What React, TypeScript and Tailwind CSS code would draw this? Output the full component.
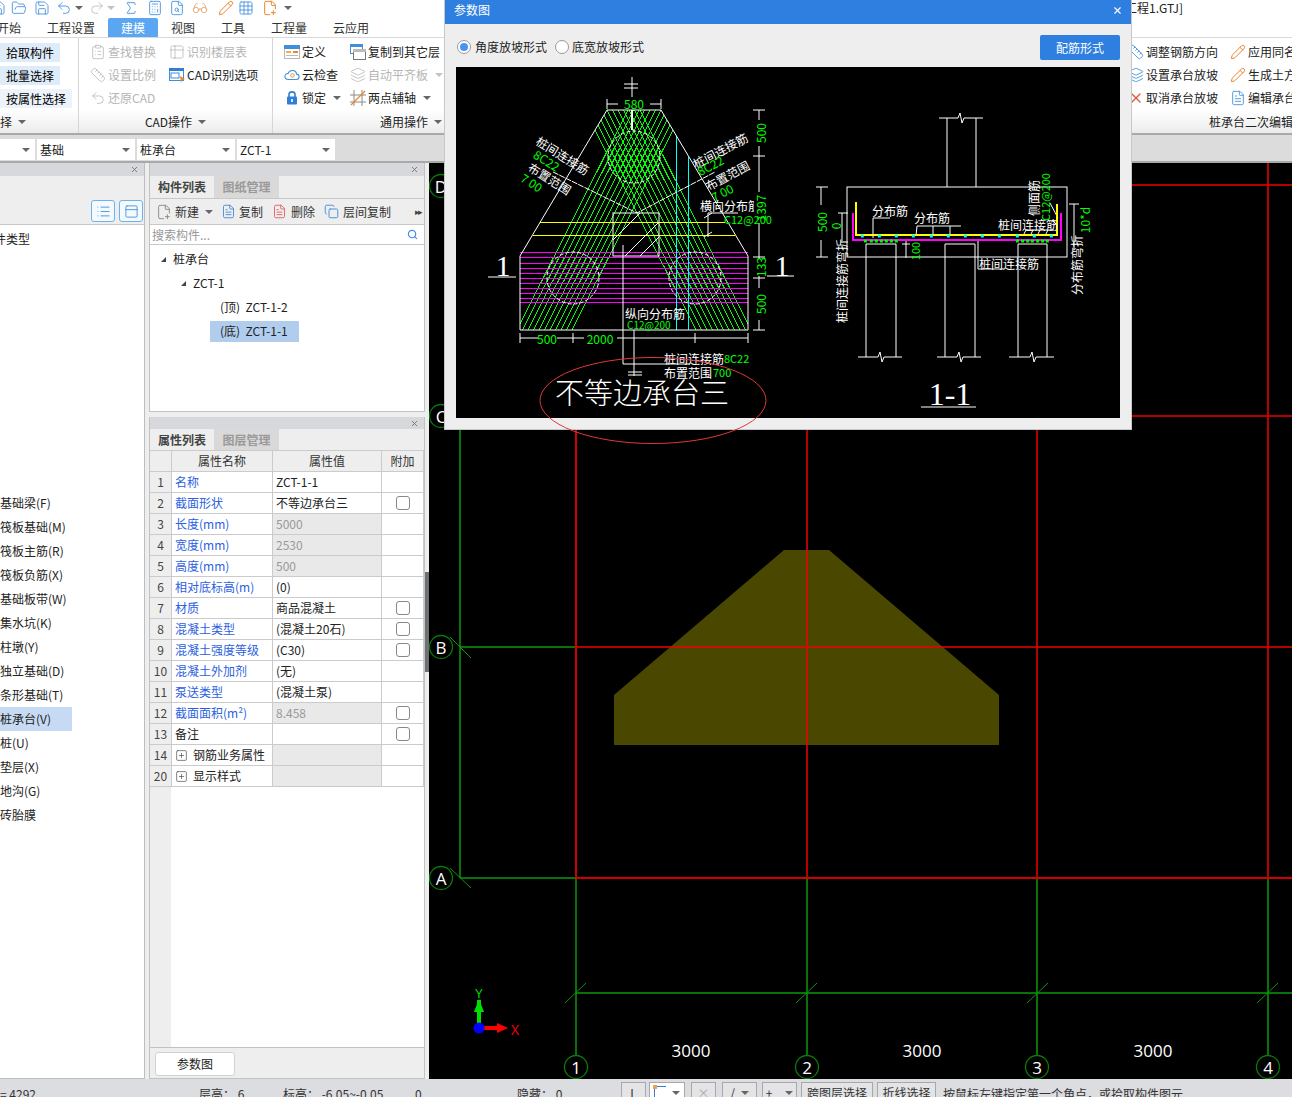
import type { ReactNode } from 'react';
import {
  Calculator, ClipboardList, Copy, FilePlus2, FileSearch, FileText, FolderOpen, Glasses, Grid3x3,
  Layers, List, PanelTop, Pencil, Redo2, Ruler, Save, Search, Sigma, SquarePlus, Table2, Undo2, X,
} from 'lucide-react';

const Caret = ({ className = '' }: { className?: string }) => (
  <span className={`inline-block w-0 h-0 border-x-[4px] border-t-[4px] border-x-transparent border-t-[#666] ${className}`} />
);

const DefineIcon = () => (
  <svg width="16" height="16" viewBox="0 0 16 16">
    <rect x="0.5" y="1.5" width="15" height="13" fill="#fff" stroke="#b8b8b8" />
    <rect x="0" y="1" width="16" height="4" fill="#3f8fdc" />
    <rect x="2" y="7" width="5" height="2" fill="#f0b040" />
    <rect x="9" y="7" width="5" height="2" fill="#e8862e" />
    <rect x="2" y="11" width="12" height="1" fill="#bbb" />
  </svg>
);

const CopyLayerIcon = () => (
  <svg width="16" height="16" viewBox="0 0 16 16">
    <rect x="0.5" y="0.5" width="12" height="9" fill="#fff" stroke="#3f8fdc" />
    <rect x="0" y="0" width="13" height="3" fill="#3f8fdc" />
    <rect x="3.5" y="5.5" width="12" height="10" fill="#fff" stroke="#777" />
    <rect x="3" y="5" width="13" height="3" fill="#bbb" />
  </svg>
);

const CloudIcon = () => (
  <svg width="18" height="16" viewBox="0 0 18 16" fill="none">
    <path d="M5 13C2 13 1 11 1 9.500C1 7.500 3 6 4.500 6.500C5.500 3.500 8 2.500 10.500 3C13 3.500 14 5.500 14 7C16 7 17 8.500 17 10C17 12 15.500 13 14 13Z" stroke="#3f8fdc" strokeWidth="1.200" fill="#fff" />
    <circle cx="9.500" cy="8.500" r="2" stroke="#e8862e" />
  </svg>
);

const LockIcon = () => (
  <svg width="12" height="15" viewBox="0 0 12 15" fill="none">
    <path d="M3 7V4.500C3 1 9 1 9 4.500V7" stroke="#2f7fd6" strokeWidth="1.600" />
    <rect x="1" y="6.500" width="10" height="8" rx="1" fill="#2f7fd6" />
    <rect x="5.200" y="9" width="1.600" height="3" fill="#fff" />
  </svg>
);

const CadIcon = () => (
  <svg width="16" height="16" viewBox="0 0 16 16">
    <rect x="0.5" y="1.500" width="14" height="12" fill="#fff" stroke="#3f8fdc" />
    <rect x="0" y="1" width="15" height="3" fill="#2f7fd6" />
    <rect x="2" y="6" width="8" height="5" fill="none" stroke="#3f8fdc" />
    <polygon points="11,9 16,12 13,13 12,16" fill="#e8862e" />
  </svg>
);

const AxisIcon = () => (
  <svg width="16" height="16" viewBox="0 0 16 16" fill="none" stroke="#8a8a8a">
    <path d="M4 0V16M12 0V16M0 5H16M0 12H16" />
    <path d="M1 15L15 1" stroke="#e8862e" strokeWidth="1.300" />
  </svg>
);

function RibbonItem({ icon, label, disabled, caret, className = '' }: { icon?: ReactNode; label: string; disabled?: boolean; caret?: boolean; className?: string }) {
  return (
    <div className={`flex items-center h-[23px] gap-[2px] whitespace-nowrap ${disabled ? 'text-[#b5b5b5]' : 'text-[#222]'} ${className}`}>
      <span className="w-4 h-4 flex items-center justify-center shrink-0">{icon}</span>
      <span>{label}</span>
      {caret && <Caret className={`ml-[5px] ${disabled ? 'opacity-40' : ''}`} />}
    </div>
  );
}

function GroupTitle({ children, className = '' }: { children: ReactNode; className?: string }) {
  return <div className={`absolute left-0 right-0 bottom-[1px] h-[20px] flex items-center gap-[6px] text-[#222] whitespace-nowrap ${className}`}>{children}<Caret /></div>;
}

const gray = { size: 16, strokeWidth: 1.3, color: '#bdbdbd' };
const blue = { size: 16, strokeWidth: 1.3, color: '#3f8fdc' };
const orange = { size: 16, strokeWidth: 1.5, color: '#e8862e' };

function TopBars() {
  return (
    <>
      <div className="h-[18px] bg-white flex items-center overflow-hidden pb-[3px]">
        <Save {...blue} className="-ml-[10px] shrink-0" />
        <FolderOpen {...blue} className="ml-[5px] shrink-0" />
        <Save {...blue} className="ml-[7px] shrink-0" />
        <Undo2 {...blue} className="ml-[6px] shrink-0" />
        <Caret className="ml-[3px]" />
        <Redo2 {...gray} className="ml-[6px] shrink-0" />
        <Caret className="ml-[2px] opacity-40" />
        <Sigma {...blue} className="ml-[8px] shrink-0" />
        <Calculator {...blue} className="ml-[8px] shrink-0" />
        <FileSearch {...blue} className="ml-[6px] shrink-0" />
        <Glasses size={16} strokeWidth={1.3} color="#e8a36a" className="ml-[7px] shrink-0" />
        <Pencil {...orange} className="ml-[10px] shrink-0" />
        <Grid3x3 {...blue} className="ml-[4px] shrink-0" />
        <FilePlus2 {...orange} className="ml-[8px] shrink-0" />
        <Caret className="ml-[6px]" />
        <div className="ml-auto w-[167px] shrink-0 text-xs text-[#222] whitespace-nowrap">工程1.GTJ]</div>
      </div>
      <div className="h-[19px] bg-white flex items-stretch text-xs text-[#333] whitespace-nowrap">
        <span className="-ml-[3px] flex items-center pt-[1px]">开始</span>
        <span className="ml-[26px] flex items-center pt-[1px]">工程设置</span>
        <span className="ml-[13px] w-[50px] flex items-center justify-center bg-[#5aa6f2] text-white rounded-t-[2px] pt-[1px]">建模</span>
        <span className="ml-[13px] flex items-center pt-[1px]">视图</span>
        <span className="ml-[26px] flex items-center pt-[1px]">工具</span>
        <span className="ml-[26px] flex items-center pt-[1px]">工程量</span>
        <span className="ml-[26px] flex items-center pt-[1px]">云应用</span>
      </div>
    </>
  );
}

function Ribbon() {
  return (
    <div className="h-[98px] flex text-xs border-t border-[#d9d9d9] border-b-2 border-b-[#a9a9a9] bg-gradient-to-b from-white from-75% to-[#ececec] overflow-hidden">
      <div className="relative w-[79px] shrink-0 pt-[3px] border-r border-[#d6d6d6]">
        <div className="flex flex-col">
          <div className="h-[23px] flex items-center"><span className="w-[60px] h-[19px] pl-[6px] bg-[#deebf9] flex items-center">拾取构件</span></div>
          <div className="h-[23px] flex items-center"><span className="w-[60px] h-[19px] pl-[6px] bg-[#deebf9] flex items-center">批量选择</span></div>
          <div className="h-[23px] flex items-center"><span className="w-[72px] h-[19px] pl-[6px] bg-[#edf3fb] flex items-center">按属性选择</span></div>
        </div>
        <GroupTitle><span>择</span></GroupTitle>
      </div>

      <div className="relative w-[194px] shrink-0 pt-[2px] pl-[11px] border-r border-[#d6d6d6]">
        <div className="grid grid-cols-[79px_auto]">
          <RibbonItem disabled label="查找替换" icon={<ClipboardList {...gray} />} />
          <RibbonItem disabled label="识别楼层表" icon={<Table2 {...gray} />} />
          <RibbonItem disabled label="设置比例" icon={<Ruler {...gray} />} />
          <RibbonItem label="CAD识别选项" icon={<CadIcon />} />
          <RibbonItem disabled label="还原CAD" icon={<Undo2 {...gray} />} />
        </div>
        <GroupTitle className="justify-center"><span>CAD操作</span></GroupTitle>
      </div>

      <div className="relative w-[171px] shrink-0 pt-[2px] pl-[11px]">
        <div className="grid grid-cols-[66px_auto]">
          <RibbonItem label="定义" icon={<DefineIcon />} />
          <RibbonItem label="复制到其它层" icon={<CopyLayerIcon />} />
          <RibbonItem label="云检查" icon={<CloudIcon />} />
          <RibbonItem disabled caret label="自动平齐板" icon={<Layers {...gray} />} />
          <RibbonItem caret label="锁定" icon={<LockIcon />} />
          <RibbonItem caret label="两点辅轴" icon={<AxisIcon />} />
        </div>
        <GroupTitle className="justify-end pr-[2px]"><span>通用操作</span></GroupTitle>
      </div>

      <div className="w-[684px] shrink-0" />

      <div className="relative flex-1 pt-[2px]">
        <div className="grid grid-cols-[102px_auto] whitespace-nowrap">
          <RibbonItem label="调整钢筋方向" icon={<Ruler {...blue} />} />
          <RibbonItem label="应用同名" icon={<Pencil {...orange} />} />
          <RibbonItem label="设置承台放坡" icon={<Layers {...blue} />} />
          <RibbonItem label="生成土方" icon={<Pencil {...orange} />} />
          <RibbonItem label="取消承台放坡" icon={<X size={16} strokeWidth={2} color="#e05a4a" />} />
          <RibbonItem label="编辑承台" icon={<FileText {...blue} />} />
        </div>
        <div className="absolute left-[81px] bottom-[1px] h-[20px] flex items-center whitespace-nowrap text-[#222]">桩承台二次编辑</div>
      </div>
    </div>
  );
}

function Selector({ label, className }: { label?: string; className: string }) {
  return (
    <div className={`h-[21px] bg-white flex items-center justify-between pl-[3px] pr-[5px] text-xs text-[#222] ${className}`}>
      <span>{label}</span>
      <Caret />
    </div>
  );
}

function SelectorRow() {
  return (
    <div className="h-[28px] bg-[#dcdcdc] border-b-2 border-b-[#a9a9a9] flex items-start pt-[4px] gap-[2px]">
      <Selector className="w-[35px]" />
      <Selector className="w-[98px]" label="基础" />
      <Selector className="w-[98px]" label="桩承台" />
      <Selector className="w-[98px]" label="ZCT-1" />
    </div>
  );
}

const PanelHeader = ({ className = 'h-[13px]' }: { className?: string }) => (
  <div className={`${className} bg-[#d7d8dc] flex items-center justify-end pr-[5px] shrink-0`}>
    <X size={9} strokeWidth={2.5} color="#777" />
  </div>
);

const navItems = ['基础梁(F)', '筏板基础(M)', '筏板主筋(R)', '筏板负筋(X)', '基础板带(W)', '集水坑(K)', '柱墩(Y)', '独立基础(D)', '条形基础(T)', '桩承台(V)', '桩(U)', '垫层(X)', '地沟(G)', '砖胎膜'];

function LeftPanel() {
  return (
    <div className="w-[145px] shrink-0 flex flex-col border-r border-[#bdbdbd]">
      <PanelHeader />
      <div className="h-[22px] bg-[#eeeeee] shrink-0" />
      <div className="h-[27px] bg-[#eeeeee] border-b border-[#c8c8c8] flex items-center justify-end gap-[4px] pr-[1px] shrink-0">
        <span className="w-6 h-[22px] border border-[#6db1ee] rounded-[3px] flex items-center justify-center bg-[#f4f9fe]"><List size={15} strokeWidth={1.4} color="#3f8fdc" /></span>
        <span className="w-6 h-[22px] border border-[#6db1ee] rounded-[3px] flex items-center justify-center bg-[#f4f9fe]"><PanelTop size={15} strokeWidth={1.4} color="#3f8fdc" /></span>
      </div>
      <div className="flex-1 bg-white text-xs text-[#222] pt-[5px] border-b border-[#bdbdbd]">
        <div className="h-[18px] flex items-center -ml-[6px]">件类型</div>
        <div className="h-[243px]" />
        {navItems.map((item) => (
          <div key={item} className={`h-6 flex items-center whitespace-nowrap w-[72px] ${item === '桩承台(V)' ? 'bg-[#c6daf3]' : ''}`}>{item}</div>
        ))}
      </div>
    </div>
  );
}

function PanelTabs({ active, other, className }: { active: string; other: string; className: string }) {
  return (
    <div className={`${className} bg-[#eeeeee] flex text-xs shrink-0`}>
      <span className="w-[64px] flex items-center justify-center font-bold text-[#444]">{active}</span>
      <span className="w-[65px] flex items-center justify-center bg-[#d9d9d9] text-[#999] font-bold">{other}</span>
    </div>
  );
}

function ComponentPanel() {
  const tree = [
    { label: '桩承台', indent: 'pl-[11px]', arrow: true },
    { label: 'ZCT-1', indent: 'pl-[31px]', arrow: true },
    { label: '(顶)  ZCT-1-2', indent: 'pl-[70px]' },
    { label: '(底)  ZCT-1-1', indent: 'pl-[70px]', selected: true },
  ];
  return (
    <div className="h-[249px] shrink-0 flex flex-col border border-t-0 border-[#c2c2c2] bg-white">
      <PanelHeader />
      <PanelTabs active="构件列表" other="图纸管理" className="h-[22px]" />
      <div className="h-[27px] bg-[#eeeeee] border-y border-[#c8c8c8] flex items-center text-xs text-[#333] pl-[6px] shrink-0 whitespace-nowrap">
        <FilePlus2 size={16} strokeWidth={1.2} color="#777" />
        <span className="ml-[3px]">新建</span>
        <Caret className="ml-[6px]" />
        <FileText size={15} strokeWidth={1.3} color="#2f7fd6" className="ml-[8px]" />
        <span className="ml-[3px]">复制</span>
        <FileText size={15} strokeWidth={1.3} color="#d9534f" className="ml-[9px]" />
        <span className="ml-[4px]">删除</span>
        <Copy size={15} strokeWidth={1.5} color="#3f8fdc" className="ml-[9px]" />
        <span className="ml-[4px]">层间复制</span>
        <span className="ml-auto mr-[3px] text-[9px] text-[#444] tracking-[-2px]">▸▸</span>
      </div>
      <div className="h-[20px] border-b border-[#c8c8c8] flex items-center justify-between px-[2px] text-xs text-[#999] shrink-0">
        <span>搜索构件...</span>
        <Search size={11} strokeWidth={2.5} color="#3f8fdc" className="mr-[4px]" />
      </div>
      <div className="flex-1 pt-[2px] text-xs text-[#222]">
        {tree.map((row) => (
          <div key={row.label} className={`h-6 flex items-center whitespace-pre ${row.indent}`}>
            {row.arrow && <span className="w-0 h-0 mr-[7px] border-l-[5px] border-b-[5px] border-l-transparent border-b-[#444]" />}
            {row.selected ? <span className="-ml-[10px] w-[89px] h-[21px] pl-[10px] bg-[#b1cdee] flex items-center">{row.label}</span> : <span>{row.label}</span>}
          </div>
        ))}
      </div>
    </div>
  );
}

type Prop = { no: number; name: string; value?: string; check?: boolean; muted?: boolean; blue?: boolean; plus?: boolean };

const props: Prop[] = [
  { no: 1, name: '名称', value: 'ZCT-1-1', blue: true },
  { no: 2, name: '截面形状', value: '不等边承台三', check: true, blue: true },
  { no: 3, name: '长度(mm)', value: '5000', muted: true, blue: true },
  { no: 4, name: '宽度(mm)', value: '2530', muted: true, blue: true },
  { no: 5, name: '高度(mm)', value: '500', muted: true, blue: true },
  { no: 6, name: '相对底标高(m)', value: '(0)', blue: true },
  { no: 7, name: '材质', value: '商品混凝土', check: true, blue: true },
  { no: 8, name: '混凝土类型', value: '(混凝土20石)', check: true, blue: true },
  { no: 9, name: '混凝土强度等级', value: '(C30)', check: true, blue: true },
  { no: 10, name: '混凝土外加剂', value: '(无)', blue: true },
  { no: 11, name: '泵送类型', value: '(混凝土泵)', blue: true },
  { no: 12, name: '截面面积(m²)', value: '8.458', check: true, muted: true, blue: true },
  { no: 13, name: '备注', value: '', check: true },
  { no: 14, name: '钢筋业务属性', muted: true, plus: true },
  { no: 20, name: '显示样式', muted: true, plus: true },
];

function PropertyPanel() {
  const cell = 'border-r border-b border-[#cbcbcb] flex items-center whitespace-nowrap overflow-hidden';
  return (
    <div className="flex-1 flex flex-col border border-t-0 border-[#c2c2c2] bg-white min-h-0">
      <PanelHeader className="h-[12px]" />
      <PanelTabs active="属性列表" other="图层管理" className="h-[21px]" />
      <div className="grid grid-cols-[22px_101px_109px_42px] auto-rows-[21px] text-xs border-t border-[#cbcbcb] w-[274px] shrink-0">
        <div className={`${cell} bg-[#eeeeee]`} />
        <div className={`${cell} bg-[#eeeeee] justify-center text-[#333]`}>属性名称</div>
        <div className={`${cell} bg-[#eeeeee] justify-center text-[#333]`}>属性值</div>
        <div className={`${cell} bg-[#eeeeee] justify-center text-[#333]`}>附加</div>
        {props.map((p) => (
          <div key={p.no} className="contents">
            <div className={`${cell} bg-[#eeeeee] justify-center text-[#444]`}>{p.no}</div>
            <div className={`${cell} pl-[3px] ${p.blue ? 'text-[#2c5fe0]' : 'text-[#222]'}`}>
              {p.plus && <SquarePlus size={13} strokeWidth={1.2} color="#444" className="mr-[5px] shrink-0" />}
              {p.name}
            </div>
            <div className={`${cell} pl-[3px] ${p.muted ? 'bg-[#e9e9e9] text-[#999]' : 'text-[#222]'}`}>{p.value}</div>
            <div className={`${cell} justify-center`}>
              {p.check && <span className="w-[14px] h-[14px] border border-[#888] rounded-[3px] bg-white" />}
            </div>
          </div>
        ))}
      </div>
      <div className="flex-1 flex">
        <div className="w-[21px] bg-[#eeeeee]" />
      </div>
      <div className="h-[31px] bg-[#eeeeee] border-t border-[#c2c2c2] pl-[5px] pt-[4px] shrink-0">
        <div className="w-[80px] h-[24px] bg-white border border-[#d2d2d2] rounded-[3px] flex items-center justify-center text-xs text-[#222]">参数图</div>
      </div>
    </div>
  );
}

function Bubble({ x, y, label }: { x: number; y: number; label: string }) {
  return (
    <g>
      <circle cx={x} cy={y} r={11.5} fill="#000" stroke="#0a7a0a" strokeWidth={1.3} />
      <text x={x} y={y} fill="#fff" fontSize={17} textAnchor="middle" dominantBaseline="central" fontFamily="'Open Sans', sans-serif">{label}</text>
    </g>
  );
}

function Canvas() {
  const G = '#0d960d';
  const R = '#f00000';
  return (
    <div className="flex-1 bg-black min-w-0">
      <svg viewBox="429 163 863 916" className="block w-full h-full" fontFamily="'Open Sans', sans-serif">
        <polygon points="614,695 784,550 829,550 999,695 999,745 614,745" fill="#4a4800" />
        <g fill="none" strokeWidth={1.5}>
          <path d="M460 163V878M460 185H576M460 416H576M460 647H576M460 878H576" stroke={G} />
          <path d="M576 878V1079M807 878V1079M1037 878V1079M1268 878V1079M576 993H1292" stroke={G} />
          <path d="M807 163V878M1037 163V878M1268 163V878M576 185H1292M576 416H1292M576 647H1292" stroke={R} />
        </g>
        <g shapeRendering="crispEdges" fill="none">
          <path d="M576 163V878" stroke="#d00000" strokeWidth={2} />
          <path d="M576 878H1292" stroke="#d00000" strokeWidth={2} />
        </g>
        <path d="M450 637L471 658M450 868L471 888M565 1003L586 983M796 1003L817 983M1027 1003L1048 983M1257 1003L1278 983" stroke={G} strokeWidth={1} />
        <Bubble x={441} y={186} label="D" />
        <Bubble x={441} y={416} label="C" />
        <Bubble x={441} y={647} label="B" />
        <Bubble x={441} y={878} label="A" />
        <Bubble x={576} y={1067} label="1" />
        <Bubble x={807} y={1067} label="2" />
        <Bubble x={1037} y={1067} label="3" />
        <Bubble x={1268} y={1067} label="4" />
        {[691, 922, 1153].map((x) => (
          <text key={x} x={x} y={1050} fill="#fff" fontSize={17} textAnchor="middle" dominantBaseline="central">3000</text>
        ))}
        <path d="M479 1028V1000" stroke="#00e000" strokeWidth={4} />
        <polygon points="479,999 474,1012 484,1012" fill="#00e000" />
        <path d="M479 1028H500" stroke="#ff0000" strokeWidth={4} />
        <polygon points="508,1028 497,1023 497,1033" fill="#ff0000" />
        <circle cx={479} cy={1028} r={5.5} fill="#0000ff" />
        <text x={479} y={993} fill="#00e000" fontSize={13} textAnchor="middle" dominantBaseline="central">Y</text>
        <text x={515} y={1029} fill="#ff0000" fontSize={14} textAnchor="middle" dominantBaseline="central">X</text>
      </svg>
    </div>
  );
}

function DrawText({ x, y, text, size = 12, fill = '#fff', rotate, anchor = 'middle', family, weight }: { x: number; y: number; text: string; size?: number; fill?: string; rotate?: number; anchor?: 'start' | 'middle' | 'end'; family?: string; weight?: number }) {
  return (
    <text x={x} y={y} fill={fill} fontSize={size} fontFamily={family} fontWeight={weight} textAnchor={anchor} dominantBaseline="central" transform={rotate ? `rotate(${rotate} ${x} ${y})` : undefined}>{text}</text>
  );
}

const SERIF = "'Liberation Serif', 'Noto Sans CJK SC', serif";
const hatchA = Array.from({ length: 11 }, (_, i) => 517 + 5.5 * i);
const magentaYs = [252, 257, 263, 268, 273, 278, 283, 288, 293, 298, 302];
const cyanDots = [187, 238, 289, 340, 394, 445, 496, 547, 598, 652, 703, 754].map((v) => v / 3 + 800);
const greenDots = [196, 214, 229, 244, 259, 274, 289, 652, 668, 683, 697, 713, 728, 742].map((v) => v / 3 + 800);

function PlanDrawing() {
  const GR = '#00ff00';
  return (
    <svg viewBox="456 67 664 351" className="block w-[664px] h-[351px] bg-black" fontFamily="'Noto Sans CJK SC', sans-serif">
      <defs>
        <clipPath id="outline"><polygon points="607,110 661,110 748,256 748,330 520,330 520,256" /></clipPath>
        <clipPath id="cut"><rect x="690" y="190" width="64" height="30" /></clipPath>
      </defs>
      <g clipPath="url(#outline)" stroke={GR} strokeWidth={1} shapeRendering="crispEdges">
        {hatchA.map((x) => <line key={x} x1={x + 111} y1={110} x2={x} y2={330} />)}
        {hatchA.map((x) => <line key={x} x1={1268 - x - 111} y1={110} x2={1268 - x} y2={330} />)}
      </g>
      <g stroke="#ffff00" shapeRendering="crispEdges">
        <line x1={540} y1={222} x2={725} y2={222} />
        <line x1={533} y1={235} x2={735} y2={235} />
      </g>
      <g stroke="#ff00ff" shapeRendering="crispEdges">
        {magentaYs.map((y) => <line key={y} x1={520} y1={y} x2={748} y2={y} />)}
      </g>
      <path d="M676 136V330M688 157V330" stroke="#00ffff" shapeRendering="crispEdges" />
      <g fill="none" stroke="#fff" strokeWidth={1}>
        <polygon points="607,110 661,110 748,256 748,330 520,330 520,256" />
        <circle cx={634} cy={157} r={26} strokeDasharray="4 2" />
        <circle cx={573} cy={278} r={26} strokeDasharray="4 2" />
        <circle cx={695} cy={278} r={26} strokeDasharray="4 2" />
        <rect x={613} y={213} width={46} height={43} />
        <path d="M613 240L640 213M625 256L659 222M640 256L659 237" />
        <path d="M553 172L637 213L715 172" strokeDasharray="6 1" />
        <path d="M632 110V130" strokeWidth={2} />
        <path d="M632 77V97M624 84H638M624 88H638" />
        <path d="M607 104H618M650 104H661M607 99V109M661 99V109" />
        <path d="M759 110V120M759 146V192M759 223V258M759 276V288M759 320V330M753 110H765M753 156H765M753 257H765M753 278H765M753 330H765" />
        <path d="M488 277H516M767 276H794" />
        <path d="M520 338H538M557 338H584M617 338H748M520 333V343M573 333V343M695 333V343M748 333V343" />
        <path d="M623 245V364H690M634 330V376M628 372H642M628 375H642" />
        <path d="M708 237V213H738M704 237L712 232M704 218L712 213" />
      </g>
      <DrawText x={634} y={103} text="580" fill={GR} size={12} />
      <DrawText x={760} y={133} text="500" fill={GR} size={12} rotate={-90} />
      <DrawText x={760} y={208} text="1397" fill={GR} size={12} rotate={-90} />
      <DrawText x={760} y={267} text="133" fill={GR} size={12} rotate={-90} />
      <DrawText x={760} y={304} text="500" fill={GR} size={12} rotate={-90} />
      <DrawText x={547} y={338} text="500" fill={GR} size={12} />
      <DrawText x={600} y={338} text="2000" fill={GR} size={12} />
      <DrawText x={503} y={265} text="1" size={30} family={SERIF} />
      <DrawText x={782} y={265} text="1" size={30} family={SERIF} />
      <DrawText x={563} y={155} text="桩间连接筋" rotate={32} />
      <DrawText x={547} y={160} text="8C22" fill={GR} rotate={32} />
      <DrawText x={550} y={178} text="布置范围" rotate={32} />
      <DrawText x={532} y={182} text="7 00" fill={GR} rotate={32} />
      <DrawText x={720} y={150} text="桩间连接筋" rotate={-28} />
      <DrawText x={710} y={165} text="8C22" fill={GR} rotate={-28} />
      <DrawText x={727} y={175} text="布置范围" rotate={-28} />
      <DrawText x={722} y={192} text="7 00" fill={GR} rotate={-28} />
      <g clipPath="url(#cut)"><DrawText x={700} y={205} text="横向分布筋" anchor="start" /></g>
      <DrawText x={724} y={219} text="C12@200" fill={GR} anchor="start" size={11} />
      <DrawText x={625} y={313} text="纵向分布筋" anchor="start" />
      <DrawText x={627} y={324} text="C12@200" fill={GR} anchor="start" size={10} />
      <DrawText x={664} y={358} text="桩间连接筋" anchor="start" />
      <DrawText x={724} y={358} text="8C22" fill={GR} anchor="start" size={11} />
      <DrawText x={664} y={372} text="布置范围" anchor="start" />
      <DrawText x={713} y={372} text="700" fill={GR} anchor="start" size={11} />
      <DrawText x={642} y={391} text="不等边承台三" size={29} weight={300} />

      <g fill="none" stroke="#fff" strokeWidth={1}>
        <rect x={847} y={187} width={220} height={70} />
        <path d="M947 187V118M976 187V118M939 118H958L960 113L962 123L964 118H983" />
        <path d="M866 357V244H896V357M858 357H878L880 352L882 362L884 357H902" />
        <path d="M945 357V244H975V357M937 357H957L959 352L961 362L963 357H981" />
        <path d="M1018 357V244H1047V357M1009 357H1030L1032 352L1034 362L1036 357H1054" />
        <path d="M821 187V205M821 240V257M816 187H828M816 257H828M842 213V241M838 213H848M1074 204V250M1069 204H1079M906 241V258M902 244H910" />
        <path d="M873 238V218H890M916 236L917 226H961M933 236V226M950 236V226M978 239V269H1004" />
        <path d="M1023 236L1026 230H1054M1030 236L1033 230M1037 236L1040 230M1045 236L1048 230M1050 203L1058 218M1052 220L1058 226" />
      </g>
      <path d="M856 202V235H1057V204" fill="none" stroke="#ffff00" strokeWidth={2} />
      <path d="M853 213V240H1061V213" fill="none" stroke="#ff00ff" strokeWidth={2} />
      {cyanDots.map((x) => <rect key={x} x={x - 1.5} y={234.5} width={3} height={3} fill="#00ffff" />)}
      {greenDots.map((x) => <rect key={x} x={x - 1.5} y={239.5} width={3} height={3} fill="#00ff00" />)}
      <DrawText x={890} y={210} text="分布筋" />
      <DrawText x={932} y={217} text="分布筋" />
      <DrawText x={1028} y={224} text="桩间连接筋" />
      <DrawText x={1009} y={263} text="桩间连接筋" />
      <DrawText x={1033} y={198} text="侧面筋" rotate={-90} />
      <DrawText x={1045} y={197} text="C12@200" fill={GR} size={11} rotate={-90} />
      <DrawText x={821} y={222} text="500" fill={GR} rotate={-90} />
      <DrawText x={835} y={226} text="0" fill={GR} rotate={-90} />
      <DrawText x={915} y={251} text="100" fill={GR} size={11} rotate={-90} />
      <DrawText x={1084} y={220} text="10*d" fill={GR} rotate={-90} />
      <DrawText x={841} y={281} text="桩间连接筋弯折" rotate={-90} />
      <DrawText x={1076} y={265} text="分布筋弯折" rotate={-90} />
      <DrawText x={950} y={394} text="1-1" size={32} family={SERIF} />
      <path d="M921 407H976" stroke="#fff" />
    </svg>
  );
}

function Dialog() {
  return (
    <div className="absolute left-[444px] top-0 w-[688px] h-[430px] bg-[#eeeeee] border-b border-r border-l border-[#c4c8cc] flex flex-col z-10">
      <div className="h-6 bg-[#2e7fe0] flex items-center justify-between pl-[9px] pr-[8px] pb-[4px] text-xs text-white shrink-0">
        <span>参数图</span>
        <X size={11} strokeWidth={2.5} color="#fff" />
      </div>
      <div className="h-[43px] flex items-center pl-[12px] pr-[11px] pt-[2px] text-xs text-[#222] shrink-0">
        <span className="w-[14px] h-[14px] rounded-full border border-[#999] bg-white flex items-center justify-center"><span className="w-[8px] h-[8px] rounded-full bg-[#4a96ee]" /></span>
        <span className="ml-[4px]">角度放坡形式</span>
        <span className="ml-[8px] w-[14px] h-[14px] rounded-full border border-[#999] bg-white" />
        <span className="ml-[3px]">底宽放坡形式</span>
        <span className="ml-auto mt-[2px] w-[80px] h-[25px] bg-[#2e7fe0] rounded-[2px] text-white flex items-center justify-center">配筋形式</span>
      </div>
      <div className="px-[11px]"><PlanDrawing /></div>
    </div>
  );
}

function StatusButton({ children, className = '' }: { children?: ReactNode; className?: string }) {
  return <span className={`h-[22px] border border-[#a8a8a8] flex items-start justify-center gap-[6px] pt-[2px] text-xs text-[#333] whitespace-nowrap shrink-0 ${className}`}>{children}</span>;
}

function StatusBar() {
  return (
    <div className="h-[18px] bg-[#dcdde0] flex items-start overflow-hidden text-xs text-[#333] whitespace-pre">
      <span className="mt-[7px] w-[199px] shrink-0">= 4292</span>
      <span className="mt-[7px] w-[84px] shrink-0">层高： 6</span>
      <span className="mt-[7px] w-[132px] shrink-0">标高： -6.05~-0.05</span>
      <span className="mt-[7px] w-[102px] shrink-0">0</span>
      <span className="mt-[7px] w-[104px] shrink-0">隐藏： 0</span>
      <div className="flex items-start mt-[3px]">
        <StatusButton className="w-[25px] bg-[#e4e4e6]">L</StatusButton>
        <StatusButton className="ml-[3px] w-[36px] bg-white border-[#2e8be6]">
          <span className="relative w-[12px] h-[12px] mt-[1px] border-l border-t border-[#2f7fd6]"><span className="absolute -left-[2px] -top-[2px] w-[4px] h-[4px] bg-[#f0a050]" /></span>
          <Caret className="mt-[6px]" />
        </StatusButton>
        <StatusButton className="ml-[6px] w-[25px] bg-[#e4e4e6] text-[#aaa]">×</StatusButton>
        <StatusButton className="ml-[6px] w-[35px] bg-[#e4e4e6]">/<Caret className="mt-[6px]" /></StatusButton>
        <StatusButton className="ml-[5px] w-[35px] bg-[#e4e4e6]">+_<Caret className="mt-[6px]" /></StatusButton>
        <StatusButton className="ml-[4px] w-[72px] bg-[#e4e4e6]">跨图层选择</StatusButton>
        <StatusButton className="ml-[4px] w-[59px] bg-[#e4e4e6]">折线选择</StatusButton>
      </div>
      <span className="mt-[7px] ml-[7px]">按鼠标左键指定第一个角点，或拾取构件图元</span>
    </div>
  );
}

export default function App() {
  return (
    <div className="relative w-[1292px] h-[1097px] overflow-hidden bg-[#eeeeee] flex flex-col font-['Noto_Sans_CJK_SC',sans-serif]">
      <TopBars />
      <Ribbon />
      <SelectorRow />
      <div className="h-[916px] flex bg-[#eeeeee]">
        <LeftPanel />
        <div className="w-[4px] shrink-0" />
        <div className="w-[276px] shrink-0 flex flex-col gap-[5px]">
          <ComponentPanel />
          <PropertyPanel />
        </div>
        <div className="w-[4px] shrink-0 flex flex-col">
          <div className="h-[409px]" />
          <div className="h-[100px] bg-[#6f7275]" />
        </div>
        <Canvas />
      </div>
      <StatusBar />
      <Dialog />
      <svg viewBox="0 0 230 90" className="absolute left-[538px] top-[355px] w-[230px] h-[90px] z-20" fill="none">
        <ellipse cx={115} cy={45.5} rx={113} ry={43} stroke="#e0383c" strokeWidth={1} />
      </svg>
    </div>
  );
}
